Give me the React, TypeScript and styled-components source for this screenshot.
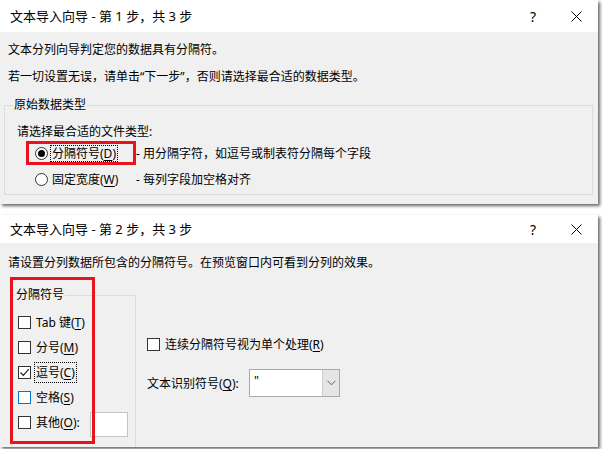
import React from 'react';
import styled, { createGlobalStyle } from 'styled-components';

const Global = createGlobalStyle`
  html, body { margin: 0; padding: 0; background: #ffffff; }
  body {
    font-family: "Noto Sans", "Noto Sans CJK SC", sans-serif;
    font-size: 12px;
    color: #000;
  }
  * { box-sizing: border-box; }
  u { text-underline-offset: 2px; text-decoration-thickness: 1px; }
`;

const Page = styled.div`
  width: 603px;
  height: 449px;
  overflow: hidden;
  display: flex;
  flex-direction: column;
  gap: 11px;
`;

const Window = styled.div<{ $h: number }>`
  width: 598px;
  height: ${(p) => p.$h}px;
  flex-shrink: 0;
  background: #f0f0f0;
  box-shadow: 2px 2px 3px rgba(0, 0, 0, 0.6);
  display: flex;
  flex-direction: column;
  overflow: hidden;
`;

const TitleBar = styled.div<{ $h: number }>`
  height: ${(p) => p.$h}px;
  flex-shrink: 0;
  background: #fff;
  display: flex;
  align-items: center;
  padding-left: 10px;
  font-size: 13px;
`;

const TitleText = styled.div`
  flex: 1;
  line-height: 18px;
  white-space: nowrap;
`;

const TitleButton = styled.div<{ $w: number }>`
  width: ${(p) => p.$w}px;
  height: 100%;
  display: flex;
  align-items: center;
  justify-content: center;
  font-size: 14px;
`;

const Body = styled.div<{ $pt: number }>`
  flex: 1;
  padding: ${(p) => p.$pt}px 5px 0 4px;
  display: flex;
  flex-direction: column;
`;

const Para = styled.div<{ $mt?: number; $pl?: number }>`
  line-height: 16px;
  margin-top: ${(p) => p.$mt ?? 0}px;
  padding-left: ${(p) => p.$pl ?? 4}px;
  white-space: nowrap;
`;

const Quote = styled.span`
  font-family: "Noto Sans", sans-serif;
`;

const GroupBox = styled.fieldset<{ $mt: number; $pl: number; $w?: number; $h?: number }>`
  margin: ${(p) => p.$mt}px 0 0 0;
  padding: 0 0 2px ${(p) => p.$pl}px;
  border: 1px solid #dcdcdc;
  min-width: 0;
  ${(p) => (p.$w ? `width: ${p.$w}px; flex-shrink: 0;` : '')}
  ${(p) => (p.$h ? `height: ${p.$h}px;` : '')}
`;

const Legend = styled.legend`
  padding: 0 1px;
  line-height: 16px;
  font-size: 12px;
`;

const FieldLabel = styled.div`
  margin: 11px 0 0 4px;
  line-height: 16px;
`;

const OptionRow = styled.div`
  position: relative;
  height: 26px;
  display: flex;
  align-items: center;
  padding-left: 22px;
  white-space: nowrap;
`;

const OptionMain = styled.div`
  width: 101px;
  display: flex;
  align-items: center;
`;

const Radio = styled.span<{ $checked?: boolean }>`
  width: 13px;
  height: 13px;
  border-radius: 50%;
  border: 1px solid #333;
  background: #fff;
  display: inline-flex;
  align-items: center;
  justify-content: center;
  flex-shrink: 0;
  &::after {
    content: '';
    width: 7px;
    height: 7px;
    border-radius: 50%;
    background: ${(p) => (p.$checked ? '#000' : 'transparent')};
  }
`;

const FocusLabel = styled.span<{ $focus?: boolean; $ml: number }>`
  margin-left: ${(p) => p.$ml}px;
  padding: 0 1px;
  line-height: 15px;
  border: 1px dotted ${(p) => (p.$focus ? '#000' : 'transparent')};
`;

const RedMark = styled.div<{ $l: number; $t: number; $w: number; $h: number }>`
  position: absolute;
  left: ${(p) => p.$l}px;
  top: ${(p) => p.$t}px;
  width: ${(p) => p.$w}px;
  height: ${(p) => p.$h}px;
  border: 3px solid #e8131b;
  pointer-events: none;
  z-index: 2;
`;

const StepRow = styled.div`
  display: flex;
  align-items: flex-start;
`;

const GroupWrap = styled.div`
  position: relative;
  margin-left: 7px;
  flex-shrink: 0;
`;

const CheckList = styled.div`
  padding-top: 7px;
  display: flex;
  flex-direction: column;
`;

const CheckRow = styled.div`
  height: 25px;
  display: flex;
  align-items: center;
  padding-left: 3px;
  white-space: nowrap;
`;

const Box = styled.span<{ $hover?: boolean }>`
  width: 13px;
  height: 13px;
  flex-shrink: 0;
  border: 1px solid ${(p) => (p.$hover ? '#0078d7' : '#333')};
  background: #fff;
  display: inline-flex;
  align-items: center;
  justify-content: center;
`;

const CheckLabel = styled.span<{ $focus?: boolean }>`
  margin-left: 3px;
  padding: 0 1px;
  line-height: 19px;
  border: 1px dotted ${(p) => (p.$focus ? '#000' : 'transparent')};
`;

const OtherInput = styled.div`
  width: 38px;
  height: 25px;
  margin: 4px 0 0 8px;
  background: #fff;
  border: 1px solid #c4c4c4;
`;

const SideColumn = styled.div`
  margin-left: 11px;
  padding-top: 63px;
  display: flex;
  flex-direction: column;
`;

const SideCheck = styled.div`
  height: 20px;
  display: flex;
  align-items: center;
  white-space: nowrap;
`;

const QualifierRow = styled.div`
  margin-top: 15px;
  height: 28px;
  display: flex;
  align-items: center;
`;

const QualifierLabel = styled.span`
  width: 102px;
  white-space: nowrap;
`;

const Combo = styled.div`
  width: 91px;
  height: 28px;
  border: 1px solid #a9a9a9;
  background: #fff;
  display: flex;
`;

const ComboValue = styled.div`
  flex: 1;
  padding: 3px 0 0 4px;
  line-height: 16px;
  font-family: "Noto Sans", sans-serif;
`;

const ComboButton = styled.div`
  width: 17px;
  background: #e5e5e5;
  border-left: 1px solid #cfcfcf;
  display: flex;
  align-items: center;
  justify-content: center;
`;

const CloseIcon = () => (
  <svg width="11" height="11" viewBox="0 0 11 11">
    <path d="M0.5 0.5 L10.5 10.5 M10.5 0.5 L0.5 10.5" stroke="#000" strokeWidth="1" fill="none" />
  </svg>
);

const CheckMark = () => (
  <svg width="11" height="11" viewBox="0 0 11 11">
    <path d="M1.5 5.5 L4.3 8.3 L9.8 2.2" stroke="#222" strokeWidth="1.2" fill="none" />
  </svg>
);

const Chevron = () => (
  <svg width="9" height="6" viewBox="0 0 9 6">
    <path d="M0.5 0.8 L4.5 4.8 L8.5 0.8" stroke="#606060" strokeWidth="1" fill="none" />
  </svg>
);

const Title = ({ h, children }: { h: number; children: React.ReactNode }) => (
  <TitleBar $h={h}>
    <TitleText>{children}</TitleText>
    <TitleButton $w={44}>?</TitleButton>
    <TitleButton $w={43}>
      <CloseIcon />
    </TitleButton>
  </TitleBar>
);

export default function App() {
  return (
    <>
      <Global />
      <Page>
        <Window $h={204}>
          <Title h={32}>文本导入向导 - 第 1 步，共 3 步</Title>
          <Body $pt={10}>
            <Para>文本分列向导判定您的数据具有分隔符。</Para>
            <Para $mt={11}>
              若一切设置无误，请单击<Quote>“</Quote>下一步<Quote>”</Quote>，否则请选择最合适的数据类型。
            </Para>
            <GroupBox $mt={12} $pl={8}>
              <Legend>原始数据类型</Legend>
              <FieldLabel>请选择最合适的文件类型:</FieldLabel>
              <OptionRow>
                <RedMark $l={13} $t={1} $w={110} $h={24} />
                <OptionMain>
                  <Radio $checked />
                  <FocusLabel $focus $ml={2}>
                    分隔符号(<u>D</u>)
                  </FocusLabel>
                </OptionMain>
                <span>- 用分隔字符，如逗号或制表符分隔每个字段</span>
              </OptionRow>
              <OptionRow>
                <OptionMain>
                  <Radio />
                  <FocusLabel $ml={2}>
                    固定宽度(<u>W</u>)
                  </FocusLabel>
                </OptionMain>
                <span>- 每列字段加空格对齐</span>
              </OptionRow>
            </GroupBox>
          </Body>
        </Window>

        <Window $h={232}>
          <Title h={28}>文本导入向导 - 第 2 步，共 3 步</Title>
          <Body $pt={12}>
            <Para>请设置分列数据所包含的分隔符号。在预览窗口内可看到分列的效果。</Para>
            <StepRow>
              <GroupWrap>
                <RedMark $l={-1} $t={6} $w={85} $h={167} />
                <GroupBox $mt={16} $pl={3} $w={125} $h={200}>
                  <Legend>分隔符号</Legend>
                  <CheckList>
                    <CheckRow>
                      <Box />
                      <CheckLabel>
                        Tab 键(<u>T</u>)
                      </CheckLabel>
                    </CheckRow>
                    <CheckRow>
                      <Box />
                      <CheckLabel>
                        分号(<u>M</u>)
                      </CheckLabel>
                    </CheckRow>
                    <CheckRow>
                      <Box>
                        <CheckMark />
                      </Box>
                      <CheckLabel $focus>
                        逗号(<u>C</u>)
                      </CheckLabel>
                    </CheckRow>
                    <CheckRow>
                      <Box $hover />
                      <CheckLabel>
                        空格(<u>S</u>)
                      </CheckLabel>
                    </CheckRow>
                    <CheckRow>
                      <Box />
                      <CheckLabel>
                        其他(<u>O</u>):
                      </CheckLabel>
                      <OtherInput />
                    </CheckRow>
                  </CheckList>
                </GroupBox>
              </GroupWrap>
              <SideColumn>
                <SideCheck>
                  <Box />
                  <CheckLabel>
                    连续分隔符号视为单个处理(<u>R</u>)
                  </CheckLabel>
                </SideCheck>
                <QualifierRow>
                  <QualifierLabel>
                    文本识别符号(<u>Q</u>):
                  </QualifierLabel>
                  <Combo>
                    <ComboValue>"</ComboValue>
                    <ComboButton>
                      <Chevron />
                    </ComboButton>
                  </Combo>
                </QualifierRow>
              </SideColumn>
            </StepRow>
          </Body>
        </Window>
      </Page>
    </>
  );
}
